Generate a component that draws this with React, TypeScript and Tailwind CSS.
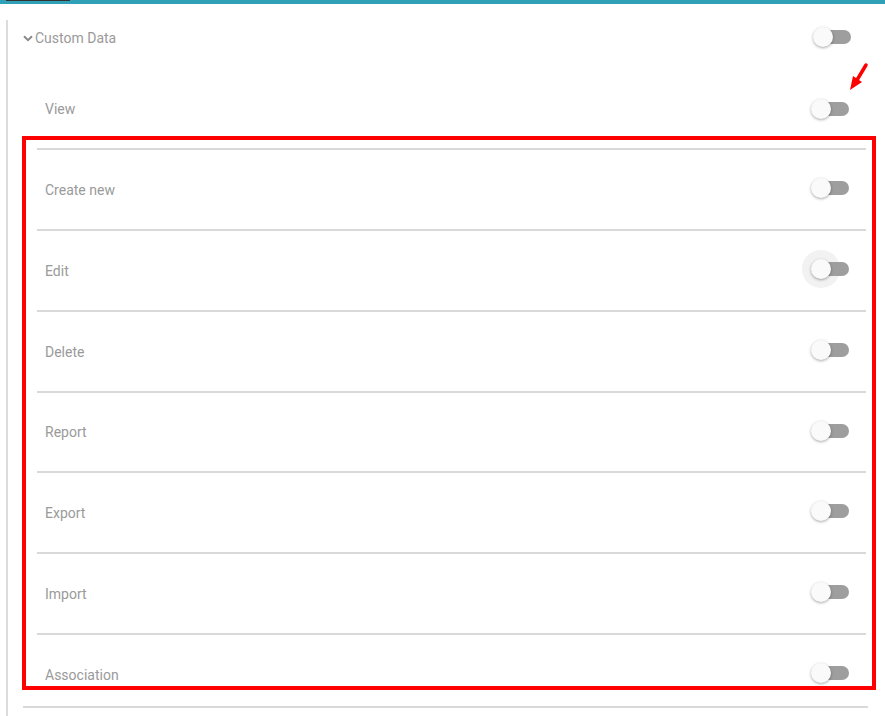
import React from "react";

const rows = [
  { label: "Create new", h: "h-[81px]" },
  { label: "Edit", h: "h-[81px]" },
  { label: "Delete", h: "h-[81px]" },
  { label: "Report", h: "h-[80px]" },
  { label: "Export", h: "h-[81px]" },
  { label: "Import", h: "h-[81px]" },
  { label: "Association", h: "h-[81px]" },
];

// Material-style switch in its "off" state
function Toggle({ focused = false, className = "" }: { focused?: boolean; className?: string }) {
  return (
    <div className={`relative h-5 w-[38px] shrink-0 ${className}`}>
      {focused && (
        <div className="absolute left-[-9px] top-[-9px] h-[38px] w-[38px] rounded-full bg-[#f2f2f2]" />
      )}
      <div className="absolute left-[5px] top-[3px] h-[14px] w-[33px] rounded-full bg-[#9e9e9e]" />
      <div className="absolute left-0 top-0 h-5 w-5 rounded-full bg-[#fafafa] shadow-[0_1px_3px_rgba(0,0,0,0.35)]" />
    </div>
  );
}

function ChevronDown() {
  return (
    <svg width="10" height="7" viewBox="0 0 10 7" className="mr-[2px]">
      <path d="M1 1.2 L5 5.2 L9 1.2" fill="none" stroke="#8a8a8a" strokeWidth="2" />
    </svg>
  );
}

export default function App() {
  return (
    <div
      className="relative h-[716px] w-[885px] overflow-hidden bg-white text-[14px] text-[#9a9a9a]"
      style={{ fontFamily: "Roboto, 'Liberation Sans', sans-serif" }}
    >
      {/* Top bar */}
      <div className="flex h-1 bg-[#30a0b6]">
        <div className="ml-[6px] h-[1px] w-[64px] bg-[#333]" />
      </div>

      <div className="ml-[6px] h-[712px] border-l-2 border-[#dcdcdc]">
        {/* Section header */}
        <div className="mt-4 flex h-[34px] items-center justify-between pl-[15px] pr-[34px]">
          <div className="mt-[2px] flex items-center">
            <ChevronDown />
            <span>Custom Data</span>
          </div>
          <Toggle />
        </div>

        {/* View row */}
        <div className="mt-[36px] flex h-[38px] items-center justify-between pl-[37px] pr-[36px]">
          <span className="mt-[1px]">View</span>
          <Toggle />
        </div>

        {/* Highlighted group */}
        <div className="ml-[14px] mt-[8px] h-[554px] w-[854px] overflow-hidden border-4 border-[#ff0000] pl-[11px] pr-[6px] pt-[8px]">
          {rows.map((row) => (
            <div
              key={row.label}
              className={`flex ${row.h} items-center justify-between border-t-2 border-[#d9d9d9] pl-[8px] pr-[17px]`}
            >
              <span className="mt-[1px]">{row.label}</span>
              <Toggle focused={row.label === "Edit"} className="-mt-[3px]" />
            </div>
          ))}
        </div>

        <div className="ml-[15px] mr-[17px] mt-[16px] h-[2px] bg-[#d9d9d9]" />
      </div>

      {/* Annotation arrow */}
      <svg
        className="absolute left-[846px] top-[60px]"
        width="26"
        height="34"
        viewBox="0 0 26 34"
      >
        <path d="M20 5 L11 20" stroke="#ff0000" strokeWidth="3.5" strokeLinecap="round" />
        <path d="M4 30 L7 16 L16 22 Z" fill="#ff0000" />
      </svg>
    </div>
  );
}
